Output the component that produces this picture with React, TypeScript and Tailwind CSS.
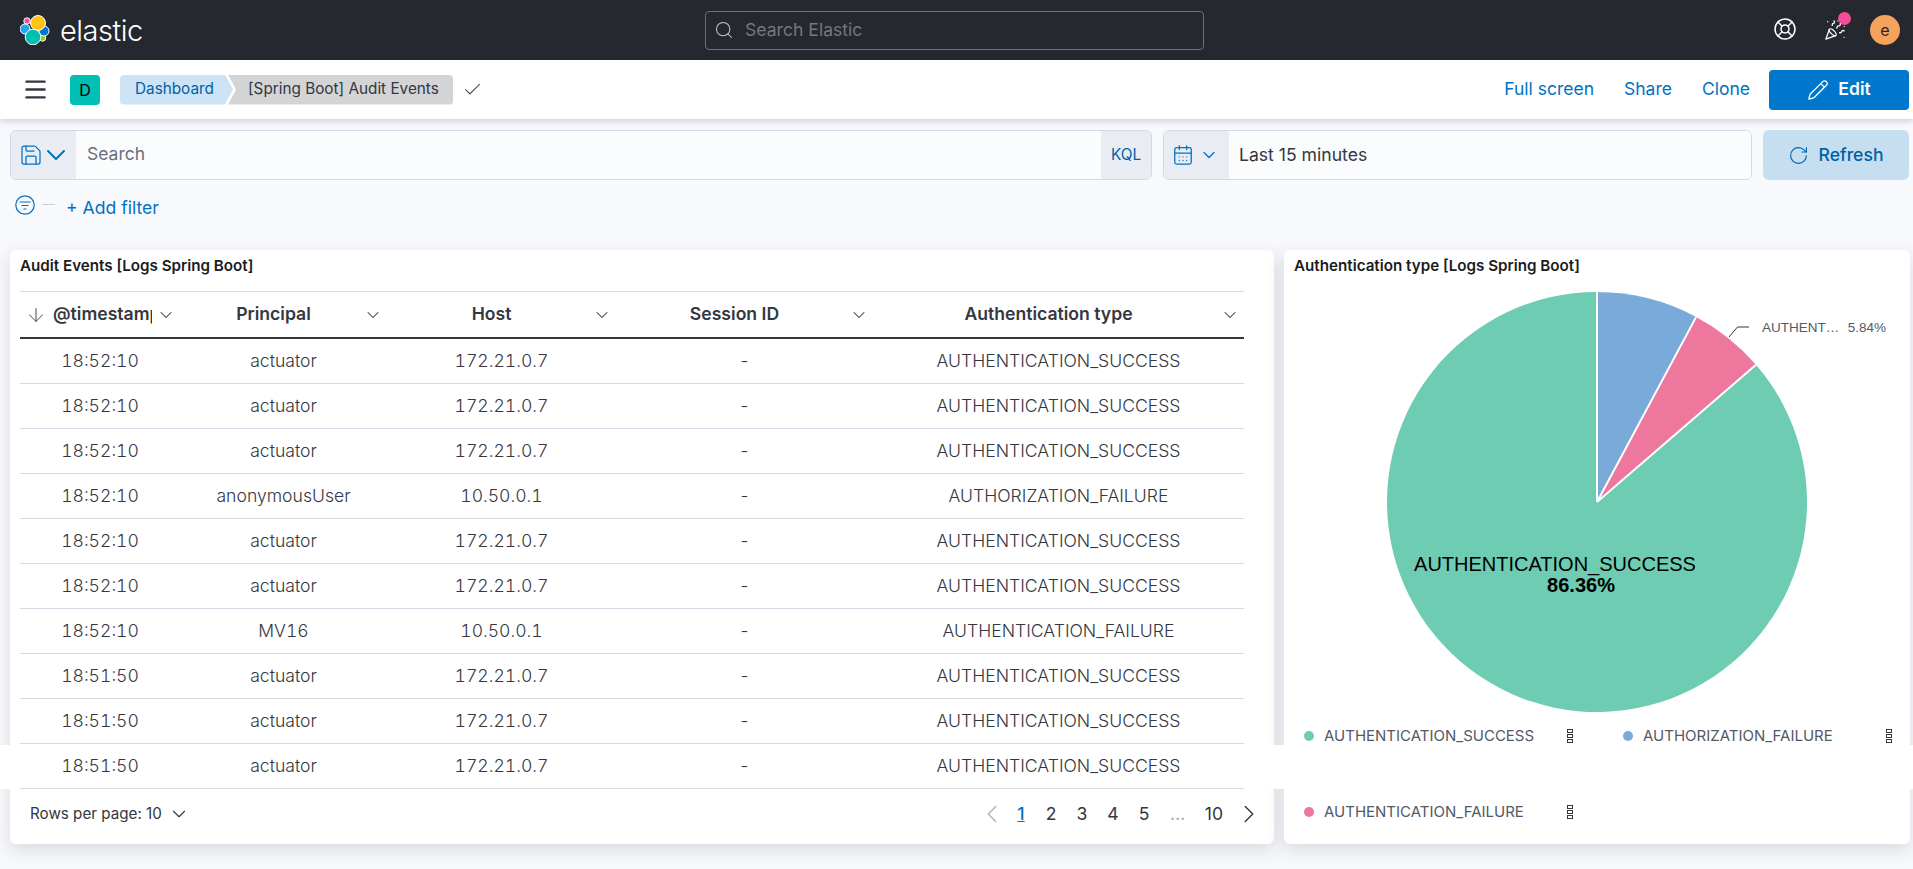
import { CalendarDays, Check, ChevronDown, ChevronLeft, ChevronRight, ArrowDown, LifeBuoy, Menu, PartyPopper, Pencil, RotateCw, Save, Search } from 'lucide-react'

const rows = [
  ['18:52:10', 'actuator', '172.21.0.7', '-', 'AUTHENTICATION_SUCCESS'],
  ['18:52:10', 'actuator', '172.21.0.7', '-', 'AUTHENTICATION_SUCCESS'],
  ['18:52:10', 'actuator', '172.21.0.7', '-', 'AUTHENTICATION_SUCCESS'],
  ['18:52:10', 'anonymousUser', '10.50.0.1', '-', 'AUTHORIZATION_FAILURE'],
  ['18:52:10', 'actuator', '172.21.0.7', '-', 'AUTHENTICATION_SUCCESS'],
  ['18:52:10', 'actuator', '172.21.0.7', '-', 'AUTHENTICATION_SUCCESS'],
  ['18:52:10', 'MV16', '10.50.0.1', '-', 'AUTHENTICATION_FAILURE'],
  ['18:51:50', 'actuator', '172.21.0.7', '-', 'AUTHENTICATION_SUCCESS'],
  ['18:51:50', 'actuator', '172.21.0.7', '-', 'AUTHENTICATION_SUCCESS'],
  ['18:51:50', 'actuator', '172.21.0.7', '-', 'AUTHENTICATION_SUCCESS'],
]

const colWidths = ['w-[160px]', 'w-[207px]', 'w-[229px]', 'w-[257px]', 'w-[371px]']

function ElasticLogo() {
  return (
    <svg viewBox="0 0 30 30" className="w-[30px] h-[30px]">
      <circle cx="7" cy="6" r="3.2" fill="#F04E98" stroke="#fff" strokeWidth="1" />
      <circle cx="5" cy="14" r="5" fill="#1BA9F5" stroke="#fff" strokeWidth="1" />
      <circle cx="22.5" cy="23" r="3.2" fill="#93C90E" stroke="#fff" strokeWidth="1" />
      <circle cx="24" cy="16" r="5" fill="#0077CC" stroke="#fff" strokeWidth="1" />
      <circle cx="18" cy="8" r="7.5" fill="#FEC514" stroke="#fff" strokeWidth="1" />
      <circle cx="13" cy="22" r="7.8" fill="#00BFB3" stroke="#fff" strokeWidth="1" />
    </svg>
  )
}

function Kebab() {
  return (
    <span className="flex flex-col gap-[1px] shrink-0">
      <span className="block w-[6px] h-[4px] border border-[#343741]" />
      <span className="block w-[6px] h-[4px] border border-[#343741]" />
      <span className="block w-[6px] h-[4px] border border-[#343741]" />
    </span>
  )
}

function LegendItem({ color, label }: { color: string; label: string }) {
  return (
    <div className="w-[269px] flex items-center justify-between">
      <div className="flex items-center gap-[10px]">
        <span className={`block w-[10px] h-[10px] rounded-full ${color}`} />
        <span className="text-[15px] text-[#535966]">{label}</span>
      </div>
      <Kebab />
    </div>
  )
}

function PieChart() {
  // center 313,222 inside the 626x440 svg, radius 210
  return (
    <svg viewBox="0 0 626 440" className="w-[626px] h-[440px] block">
      <path d="M313 222 L313 12 A210 210 0 1 0 472 84.8 Z" fill="#6DCCB1" />
      <path d="M313 222 L412.2 36.9 A210 210 0 0 1 472 84.8 Z" fill="#EE789D" />
      <path d="M313 222 L313 12 A210 210 0 0 1 412.2 36.9 Z" fill="#79AAD9" />
      <path d="M313 222 L313 12 M313 222 L412.2 36.9 M313 222 L472 84.8" stroke="#fff" strokeWidth="2" fill="none" />
      <path d="M445 57 L453.5 47 L465 47" stroke="#343741" strokeWidth="1" fill="none" />
      <text x="478" y="52" fontSize="13.5" fill="#535966" fontFamily="Liberation Sans, Arial, sans-serif">AUTHENT…</text>
      <text x="602" y="52" fontSize="13.5" fill="#535966" textAnchor="end" fontFamily="Liberation Sans, Arial, sans-serif">5.84%</text>
      <text x="271" y="291" fontSize="20" fill="#000" textAnchor="middle" fontFamily="Liberation Sans, Arial, sans-serif">AUTHENTICATION_SUCCESS</text>
      <text x="297" y="312" fontSize="20" fontWeight="700" fill="#000" textAnchor="middle" fontFamily="Liberation Sans, Arial, sans-serif">86.36%</text>
    </svg>
  )
}

export default function App() {
  return (
    <div className="relative w-[1913px] h-[869px] overflow-hidden bg-[#f8f9fd] font-['Inter',sans-serif] text-[#343741]">
      {/* Top bar */}
      <header className="h-[60px] bg-[#25282f] flex items-center relative">
        <div className="flex items-center pl-[20px] gap-[10px] w-[705px]">
          <ElasticLogo />
          <span className="text-[29px] text-white font-light leading-none tracking-[-0.5px]">elastic</span>
        </div>
        <div className="w-[499px] h-[39px] rounded-[4px] border border-[#6e7076] flex items-center pl-[8px] gap-[11px]">
          <Search className="w-[20px] h-[20px] text-[#c5c7cb]" strokeWidth={1.25} />
          <span className="text-[17.6px] text-[#74777e]">Search Elastic</span>
        </div>
        <div className="ml-auto flex items-center pr-[13px]">
          <LifeBuoy className="w-[24px] h-[24px] text-white mr-[28px] -mt-[3px]" strokeWidth={1.5} />
          <div className="relative mr-[25px]">
            <PartyPopper className="w-[22px] h-[22px] -ml-[1px] -mr-[1px] text-white" strokeWidth={1.4} />
            <span className="absolute -top-[7px] left-[13px] w-[13px] h-[13px] rounded-full bg-[#f04e98]" />
          </div>
          <span className="w-[30px] h-[30px] rounded-full bg-[#f5a35c] flex items-center justify-center text-[16px] text-[#25282f]">e</span>
        </div>
      </header>

      {/* Breadcrumb bar */}
      <div className="relative z-[1] h-[59px] bg-white shadow-[0_2px_6px_rgba(52,55,65,0.22)] flex items-center pl-[25px] pr-[4px]">
        <Menu className="w-[27px] h-[27px] -ml-[3px] text-[#343741]" strokeWidth={2.2} />
        <span className="ml-[21px] w-[30px] h-[30px] rounded-[4px] bg-[#00bfb3] flex items-center justify-center text-[16px] text-black">D</span>
        <div className="ml-[20px] flex items-center h-[30px] text-[15.3px]">
          <span className="h-full w-[113px] pl-[15px] flex items-center bg-[#cce4f5] text-[#0061a6] rounded-l-[4px] [clip-path:polygon(0_0,calc(100%-8px)_0,100%_50%,calc(100%-8px)_100%,0_100%)]">Dashboard</span>
          <span className="h-full w-[225px] -ml-[5px] pl-[20px] flex items-center whitespace-nowrap bg-[#d3d4d6] text-[#343741] rounded-r-[4px] [clip-path:polygon(0_0,100%_0,100%_100%,0_100%,8px_50%)]">[Spring Boot] Audit Events</span>
        </div>
        <Check className="ml-[9px] w-[21px] h-[21px] text-[#343741]" strokeWidth={1.2} />
        <div className="ml-auto flex items-center text-[17.5px] text-[#0071c2]">
          <span>Full screen</span>
          <span className="ml-[30px]">Share</span>
          <span className="ml-[30px]">Clone</span>
          <button className="ml-[19px] w-[140px] h-[40px] rounded-[4px] bg-[#0077cc] text-white font-semibold flex items-center justify-center gap-[9px]">
            <Pencil className="w-[22px] h-[22px]" strokeWidth={1.4} />
            Edit
          </button>
        </div>
      </div>

      {/* Query bar */}
      <div className="pt-[11px] pl-[10px] pr-[4px] flex h-[61px]">
        <div className="w-[1142px] h-[50px] rounded-[6px] border border-[#d3dae6] flex overflow-hidden">
          <div className="w-[65px] bg-[#e9edf3] flex items-center pl-[8px] text-[#0071c2]">
            <Save className="w-[24px] h-[24px] shrink-0" strokeWidth={1.25} />
            <ChevronDown className="w-[32px] h-[32px] shrink-0 -ml-[3px]" strokeWidth={1.5} />
          </div>
          <div className="flex-1 bg-[#fbfcfd] pl-[11px] pb-[2px] flex items-center text-[17.5px] text-[#69707d]">Search</div>
          <div className="w-[50px] bg-[#e9edf3] flex items-center justify-center text-[15.3px] text-[#0061a6]">KQL</div>
        </div>
        <div className="ml-[11px] w-[589px] h-[50px] rounded-[6px] border border-[#d3dae6] flex overflow-hidden">
          <div className="w-[65px] bg-[#e9edf3] flex items-center pl-[8px] text-[#0071c2]">
            <CalendarDays className="w-[22px] h-[22px] shrink-0" strokeWidth={1.4} />
            <ChevronDown className="w-[20px] h-[20px] shrink-0 ml-[5px]" strokeWidth={1.5} />
          </div>
          <div className="flex-1 bg-[#fbfcfd] pl-[10px] flex items-center text-[17.6px] text-[#343741]">Last 15 minutes</div>
        </div>
        <button className="ml-[11px] w-[146px] h-[50px] rounded-[6px] bg-[#c5dff1] text-[#0061a6] font-medium text-[17.6px] flex items-center justify-center gap-[9px]">
          <RotateCw className="w-[21px] h-[21px]" strokeWidth={1.25} />
          Refresh
        </button>
      </div>

      {/* Filter row */}
      <div className="mt-[12px] pl-[15px] flex items-center h-[32px]">
        <svg viewBox="0 0 20 20" className="w-[20px] h-[20px] -mt-[6px]" fill="none" stroke="#0071c2" strokeWidth="1.2">
          <circle cx="10" cy="10" r="9.2" />
          <path d="M4.5 7 H15.5 M6.5 10.5 H13.5 M8.5 14 H11.5" />
        </svg>
        <span className="ml-[7px] -mt-[8px] block w-[13px] h-[1px] bg-[#c9ced8]" />
        <span className="ml-[11px] text-[17.6px] text-[#0071c2]">+ Add filter</span>
      </div>

      {/* Panels */}
      <main className="mt-[26px] pl-[10px] pr-[3px] flex gap-[10px]">
        <section className="w-[1264px] h-[594px] bg-white rounded-[6px] shadow-[0_6px_18px_rgba(52,55,65,0.16)] px-[10px]">
          <h2 className="h-[41px] pt-[7px] text-[15.2px] font-semibold text-[#1a1c21] leading-[18px]">Audit Events [Logs Spring Boot]</h2>
          <div className="w-[1224px] border-t border-[#d3dae6]">
            <div className="flex h-[47px] border-b-2 border-[#343741] text-[17.6px] font-semibold">
              <div className={`${colWidths[0]} px-[8px] flex items-center`}>
                <ArrowDown className="w-[22px] h-[22px] shrink-0 -ml-[3px] mr-[6px]" strokeWidth={1} />
                <span className="flex-1 overflow-hidden whitespace-nowrap">@timestamp</span>
                <ChevronDown className="w-[20px] h-[20px] ml-[4px] -mr-[4px] shrink-0" strokeWidth={1.25} />
              </div>
              {['Principal', 'Host', 'Session ID', 'Authentication type'].map((h, i) => (
                <div key={h} className={`${colWidths[i + 1]} px-[8px] flex items-center`}>
                  <span className="flex-1 text-center">{h}</span>
                  <ChevronDown className="w-[20px] h-[20px] ml-[4px] -mr-[4px] shrink-0" strokeWidth={1.25} />
                </div>
              ))}
            </div>
            {rows.map((r, i) => (
              <div key={i} className={`flex h-[45px] border-b border-[#d3dae6] text-[17.6px] font-light tabular-nums text-[#343741] ${i === 9 ? 'relative z-20' : ''}`}>
                {r.map((c, j) => (
                  <div key={j} className={`${colWidths[j]} flex items-center justify-center`}>{c}</div>
                ))}
              </div>
            ))}
          </div>
          <div className="h-[50px] flex items-center pl-[10px]">
            <span className="text-[15.2px]">Rows per page: 10</span>
            <ChevronDown className="ml-[6px] w-[22px] h-[22px]" strokeWidth={1.25} />
            <div className="ml-auto flex items-center text-[17.6px]">
              <ChevronLeft className="w-[30px] h-[30px] text-[#a9b1bf]" strokeWidth={1.1} />
              <span className="ml-[8px] w-[12px] text-center text-[#0071c2] font-medium underline">1</span>
              <span className="ml-[18px] w-[12px] text-center">2</span>
              <span className="ml-[19px] w-[12px] text-center">3</span>
              <span className="ml-[19px] w-[12px] text-center">4</span>
              <span className="ml-[19px] w-[12px] text-center">5</span>
              <span className="ml-[20px] w-[14px] text-center text-[#98a2b3]">…</span>
              <span className="ml-[18px] w-[24px] text-center">10</span>
              <ChevronRight className="ml-[8px] w-[30px] h-[30px]" strokeWidth={1.1} />
            </div>
          </div>
        </section>

        <section className="w-[626px] h-[594px] bg-white rounded-[6px] shadow-[0_6px_18px_rgba(52,55,65,0.16)]">
          <h2 className="h-[30px] pl-[10px] pt-[7px] text-[15.2px] font-semibold text-[#1a1c21] leading-[18px]">Authentication type [Logs Spring Boot]</h2>
          <PieChart />
          <div className="pl-[20px] grid grid-cols-[319px_319px] grid-rows-[32px_32px] gap-y-[44px]">
            <LegendItem color="bg-[#6DCCB1]" label="AUTHENTICATION_SUCCESS" />
            <LegendItem color="bg-[#79AAD9]" label="AUTHORIZATION_FAILURE" />
            <LegendItem color="bg-[#EE789D]" label="AUTHENTICATION_FAILURE" />
          </div>
        </section>
      </main>

      {/* white strip running across the page in the capture */}
      <div className="absolute z-10 left-0 right-0 top-[745px] h-[44px] bg-white" />
    </div>
  )
}
